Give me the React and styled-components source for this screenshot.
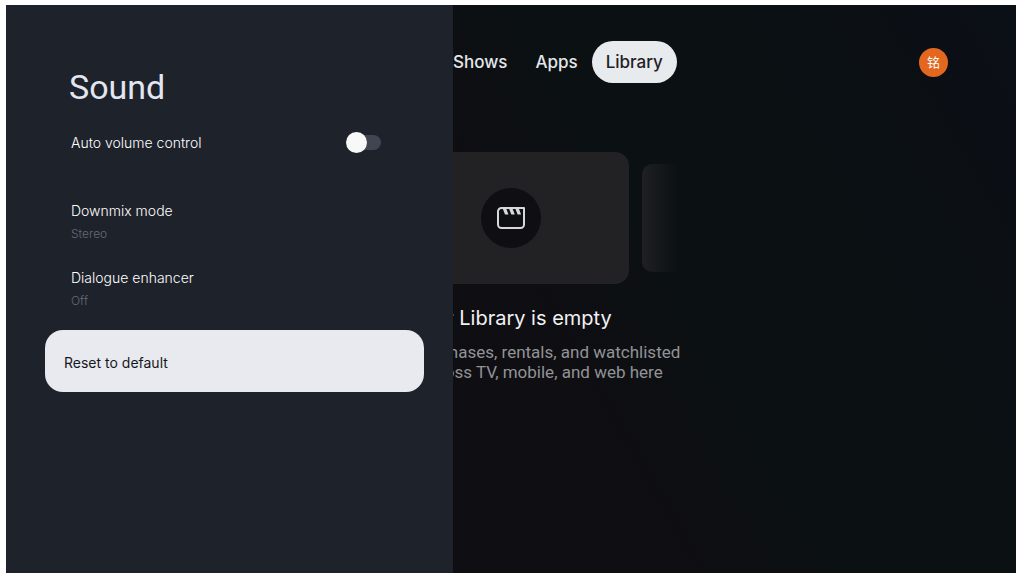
import { useState } from 'react';
import styled, { createGlobalStyle } from 'styled-components';

const GlobalStyle = createGlobalStyle`
  *, *::before, *::after {
    box-sizing: border-box;
  }
  body {
    margin: 0;
    background: #ffffff;
    font-family: Roboto, 'Noto Sans CJK SC', sans-serif;
  }
`;

const Frame = styled.div`
  display: grid;
  min-height: 100vh;
  padding: 5px 1px 3px 6px;
`;

/* the library page and the settings panel share one grid cell */
const Screen = styled.div`
  display: grid;
  grid-template-columns: minmax(0, 1fr);
  overflow: hidden;
  background: linear-gradient(60deg, #0e0d11 0%, #0f0e12 50%, #0b1013 62%, #0b1013 76%, #0b0f16 100%);
`;

const Library = styled.main`
  grid-area: 1 / 1;
  min-width: 0;
`;

const Panel = styled.aside`
  grid-area: 1 / 1;
  z-index: 1;
  width: 447px;
  max-width: 100%;
  padding: 61px 29px 0 39px;
  background: #1e222b;
`;

const Header = styled.header`
  display: flex;
  align-items: center;
  padding: 36px 68px 0 433px;
`;

const Nav = styled.nav`
  display: flex;
  align-items: center;
`;

const Tab = styled.a`
  display: flex;
  align-items: center;
  height: 42px;
  padding: 0 14px;
  border-radius: 21px;
  font-family: Inter, sans-serif;
  font-size: 17px;
  font-weight: 500;
  text-decoration: none;
  color: ${({ $active }) => ($active ? '#1f2125' : '#e4e6e8')};
  background: ${({ $active }) => ($active ? '#e8ebee' : 'transparent')};
`;

const Avatar = styled.button`
  width: 29px;
  height: 29px;
  margin-left: auto;
  padding: 0;
  border: none;
  border-radius: 50%;
  background: #e4671f;
  color: #ffffff;
  font-family: 'Noto Sans CJK SC', sans-serif;
  font-size: 13px;
  line-height: 28px;
`;

const Cards = styled.div`
  display: grid;
  grid-template-columns: 1fr auto 1fr;
  align-items: center;
  column-gap: 13px;
  margin-top: 69px;
`;

const Card = styled.div`
  display: flex;
  grid-column: 2;
  align-items: center;
  justify-content: center;
  width: 236px;
  height: 132px;
  border-radius: 14px;
  background: #222225;
`;

const NextCard = styled.div`
  width: 36px;
  height: 108px;
  border-radius: 10px 0 0 10px;
  background: linear-gradient(90deg, #1e2023, rgba(30, 32, 35, 0));
`;

const IconCircle = styled.div`
  display: flex;
  align-items: center;
  justify-content: center;
  width: 60px;
  height: 60px;
  border-radius: 50%;
  background: #0e0e13;
`;

const Empty = styled.section`
  margin-top: 20px;
  text-align: center;
`;

const EmptyTitle = styled.h2`
  margin: 0;
  font-family: Inter, sans-serif;
  font-size: 20px;
  font-weight: 400;
  line-height: 28px;
  color: #f1f2f4;
`;

const EmptyText = styled.p`
  margin: 10px 0 0;
  font-size: 17px;
  line-height: 20px;
  color: #929396;
`;

const PanelTitle = styled.h1`
  margin: 0 0 18px;
  padding-left: 24px;
  font-size: 34px;
  font-weight: 400;
  line-height: 42px;
  color: #e3e6f0;
`;

const SwitchRow = styled.label`
  display: flex;
  align-items: center;
  justify-content: space-between;
  height: 32px;
  margin-bottom: 32px;
  padding: 0 43px 0 26px;
  font-family: Inter, sans-serif;
  font-size: 14px;
  font-weight: 300;
  color: #ffffff;
`;

const Switch = styled.input`
  appearance: none;
  display: flex;
  align-items: center;
  width: 32px;
  height: 15px;
  margin: 0;
  border-radius: 8px;
  background: #414551;

  &::before {
    content: '';
    flex: none;
    width: 21px;
    height: 21px;
    margin-left: ${({ checked }) => (checked ? '14px' : '-3px')};
    border-radius: 50%;
    background: #f7f9f8;
  }
`;

const Option = styled.button`
  display: flex;
  flex-direction: column;
  justify-content: center;
  gap: 3px;
  width: 100%;
  height: 67px;
  padding: 0 26px 2px;
  border: none;
  background: transparent;
  font-family: Inter, sans-serif;
  text-align: left;
`;

const OptionLabel = styled.span`
  font-size: 14px;
  font-weight: 300;
  line-height: 20px;
  color: #ffffff;
`;

const OptionValue = styled.span`
  font-size: 12px;
  font-weight: 300;
  line-height: 20px;
  color: #666a74;
`;

const ResetButton = styled.button`
  width: 100%;
  height: 62px;
  margin-top: 6px;
  padding: 2px 19px 0;
  border: none;
  border-radius: 18px;
  background: #e9eaef;
  color: #16181d;
  font-family: Inter, sans-serif;
  font-size: 14px;
  font-weight: 400;
  text-align: left;
`;

const tabs = ['Shows', 'Apps', 'Library'];

const options = [
  { label: 'Downmix mode', value: 'Stereo' },
  { label: 'Dialogue enhancer', value: 'Off' },
];

const MovieIcon = () => (
  <svg width="28" height="22" viewBox="0 0 28 22" fill="none" stroke="#d5d9df" aria-hidden="true">
    <path
      d="M4.500 1H27v16.500a3.500 3.500 0 0 1-3.500 3.500h-19A3.500 3.500 0 0 1 1 17.500v-13A3.500 3.500 0 0 1 4.500 1z"
      strokeWidth="2"
      strokeLinejoin="round"
    />
    <path
      d="M5.500 1h3.500l2.500 6.500H8zM11.800 1h3.500l2.500 6.500h-3.500zM18.100 1h3.500l2.500 6.500h-3.500z"
      fill="#d5d9df"
      stroke="none"
    />
  </svg>
);

const App = () => {
  const [autoVolume, setAutoVolume] = useState(false);

  return (
    <Frame>
      <GlobalStyle />
      <Screen>
        <Library>
          <Header>
            <Nav>
              {tabs.map((tab) => (
                <Tab key={tab} href="#" $active={tab === 'Library'}>
                  {tab}
                </Tab>
              ))}
            </Nav>
            <Avatar>铭</Avatar>
          </Header>
          <Cards>
            <Card>
              <IconCircle>
                <MovieIcon />
              </IconCircle>
            </Card>
            <NextCard />
          </Cards>
          <Empty>
            <EmptyTitle>Your Library is empty</EmptyTitle>
            <EmptyText>
              Find your purchases, rentals, and watchlisted
              <br />
              content across TV, mobile, and web here
            </EmptyText>
          </Empty>
        </Library>
        <Panel>
          <PanelTitle>Sound</PanelTitle>
          <SwitchRow>
            Auto volume control
            <Switch
              type="checkbox"
              role="switch"
              checked={autoVolume}
              onChange={(e) => setAutoVolume(e.target.checked)}
            />
          </SwitchRow>
          {options.map(({ label, value }) => (
            <Option key={label}>
              <OptionLabel>{label}</OptionLabel>
              <OptionValue>{value}</OptionValue>
            </Option>
          ))}
          <ResetButton>Reset to default</ResetButton>
        </Panel>
      </Screen>
    </Frame>
  );
};

export default App;
